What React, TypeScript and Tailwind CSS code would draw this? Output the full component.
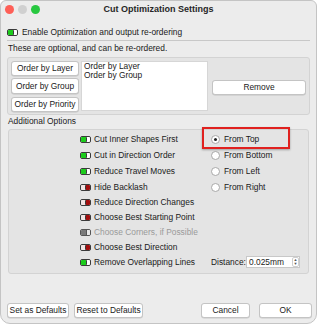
import React from 'react';

type ToggleKind = 'on' | 'off' | 'disabled';

const Toggle = ({ kind }: { kind: ToggleKind }) => {
  if (kind === 'on') {
    return (
      <div className="flex h-[7px] w-[11px] shrink-0 overflow-hidden rounded-[2px] border border-[#3a3a3a]">
        <div className="w-[5px] bg-[#1ccc1c]" />
        <div className="flex-1 rounded-[1px] border-l border-[#3a3a3a] bg-white" />
      </div>
    );
  }
  if (kind === 'off') {
    return (
      <div className="flex h-[7px] w-[11px] shrink-0 overflow-hidden rounded-[2px] border border-[#3a3a3a]">
        <div className="w-[5px] rounded-[1px] border-r border-[#3a3a3a] bg-[#f3e4e4]" />
        <div className="flex-1 bg-[#a30d0d]" />
      </div>
    );
  }
  return (
    <div className="flex h-[7px] w-[11px] shrink-0 overflow-hidden rounded-[2px] border border-[#555]">
      <div className="w-[5px] bg-[#7a7a7a]" />
      <div className="flex-1 border-l border-[#555] bg-[#e8e8e8]" />
    </div>
  );
};

const Radio = ({ checked, label }: { checked?: boolean; label: string }) => (
  <div className="flex items-center gap-[4px]">
    <div className="flex h-[9px] w-[9px] items-center justify-center rounded-full border border-[#a8a8a8] bg-white">
      {checked && <div className="h-[3px] w-[3px] rounded-full bg-[#222]" />}
    </div>
    <span>{label}</span>
  </div>
);

const MacButton = ({ children, className = '' }: { children: React.ReactNode; className?: string }) => (
  <div
    className={`flex shrink-0 items-center justify-center whitespace-nowrap rounded-[3px] border border-[#c4c4c4] bg-white shadow-[0_0.5px_0.5px_rgba(0,0,0,0.15)] ${className}`}
  >
    {children}
  </div>
);

const options: { label: string; kind: ToggleKind; h: string }[] = [
  { label: 'Cut Inner Shapes First', kind: 'on', h: 'h-[16px]' },
  { label: 'Cut in Direction Order', kind: 'on', h: 'h-[16px]' },
  { label: 'Reduce Travel Moves', kind: 'on', h: 'h-[16px]' },
  { label: 'Hide Backlash', kind: 'off', h: 'h-[16px]' },
  { label: 'Reduce Direction Changes', kind: 'off', h: 'h-[15px]' },
  { label: 'Choose Best Starting Point', kind: 'off', h: 'h-[15px]' },
  { label: 'Choose Corners, if Possible', kind: 'disabled', h: 'h-[15px]' },
  { label: 'Choose Best Direction', kind: 'off', h: 'h-[14px]' },
  { label: 'Remove Overlapping Lines', kind: 'on', h: 'h-[16px]' },
];

const radios = ['From Top', 'From Bottom', 'From Left', 'From Right'];

export default function App() {
  return (
    <div className="h-[325px] w-[317px] bg-white font-['Liberation_Sans',Arial,sans-serif] text-[8.4px] leading-[11px] text-[#1a1a1a]">
      <div className="relative flex h-[324px] w-[317px] flex-col overflow-hidden rounded-b-[10px] rounded-t-[6px] border border-[#c4c4c4] bg-[#ececec]">
        {/* title bar */}
        <div className="relative flex h-[17px] items-center justify-center">
          <div className="absolute left-[4px] top-[4px] flex gap-[4px]">
            <div className="h-[9px] w-[9px] rounded-full bg-[#fe5f57]" />
            <div className="h-[9px] w-[9px] rounded-full bg-[#d0d0d0]" />
            <div className="h-[9px] w-[9px] rounded-full bg-[#28c840]" />
          </div>
          <span className="text-[9px] font-bold text-[#262626]">Cut Optimization Settings</span>
        </div>

        <div className="mt-[9px] flex items-center gap-[4px] pl-[6px]">
          <Toggle kind="on" />
          <span>Enable Optimization and output re-ordering</span>
        </div>
        <div className="mx-[6px] mt-[2px] h-px bg-[#c8c8c8]" />

        <div className="mt-[2px] pl-[7px]">These are optional, and can be re-ordered.</div>

        {/* order panel */}
        <div className="mx-[6px] mt-[3px] flex h-[58px] gap-[2px] rounded-[3px] border border-[#d3d3d3] bg-[#e4e4e4] pl-[3px] pr-[3px] pt-[3px]">
          <div className="flex flex-col gap-[2px]">
            <MacButton className="h-[15px] w-[68px]">Order by Layer</MacButton>
            <MacButton className="h-[16px] w-[68px]">Order by Group</MacButton>
            <MacButton className="mt-[1px] h-[15px] w-[68px]">Order by Priority</MacButton>
          </div>
          <div className="h-[50px] w-[127px] border border-[#d6d6d6] bg-white pl-[2px] leading-[9px]">
            <div>Order by Layer</div>
            <div>Order by Group</div>
          </div>
          <div className="flex flex-1 items-center pl-[2px]">
            <MacButton className="h-[15px] w-full">Remove</MacButton>
          </div>
        </div>

        <div className="mt-[1px] pl-[7px]">Additional Options</div>

        {/* additional options */}
        <div className="relative mx-[7px] mt-[2px] h-[145px] rounded-[3px] border border-[#d3d3d3] bg-[#e4e4e4] pt-[1px]">
          {options.map((o, i) => (
            <div key={o.label} className={`flex items-center ${o.h}`}>
              <div className="flex w-[202px] items-center gap-[3px] pl-[71px]">
                <Toggle kind={o.kind} />
                <span className={o.kind === 'disabled' ? 'text-[#9a9a9a]' : ''}>{o.label}</span>
              </div>
              {i < radios.length && <Radio checked={i === 0} label={radios[i]} />}
              {i === options.length - 1 && (
                <div className="flex items-center">
                  <span className="w-[35px]">Distance:</span>
                  <div className="flex h-[12px] w-[54px] items-center border border-[#c8c8c8] bg-white pl-[2px]">
                    <span className="flex-1">0.025mm</span>
                    <div className="flex h-[10px] w-[7px] flex-col items-center justify-center rounded-[2px] border border-[#cfcfcf] text-[4px] leading-[4px] text-[#555]">
                      <span>▲</span>
                      <span>▼</span>
                    </div>
                  </div>
                </div>
              )}
            </div>
          ))}
          <div className="absolute left-[193px] top-[-3px] h-[22px] w-[88px] border-2 border-[#e0211f] shadow-[0_1px_2px_rgba(0,0,0,0.3)]" />
        </div>

        <div className="mt-auto mb-[5px] flex items-center pl-[6px] pr-[4px]">
          <MacButton className="h-[15px] w-[62px]">Set as Defaults</MacButton>
          <MacButton className="ml-[5px] h-[15px] w-[69px]">Reset to Defaults</MacButton>
          <div className="flex-1" />
          <MacButton className="h-[15px] w-[49px]">Cancel</MacButton>
          <MacButton className="ml-[9px] h-[15px] w-[53px] border-[#6cc0f5]">OK</MacButton>
        </div>
      </div>
    </div>
  );
}
